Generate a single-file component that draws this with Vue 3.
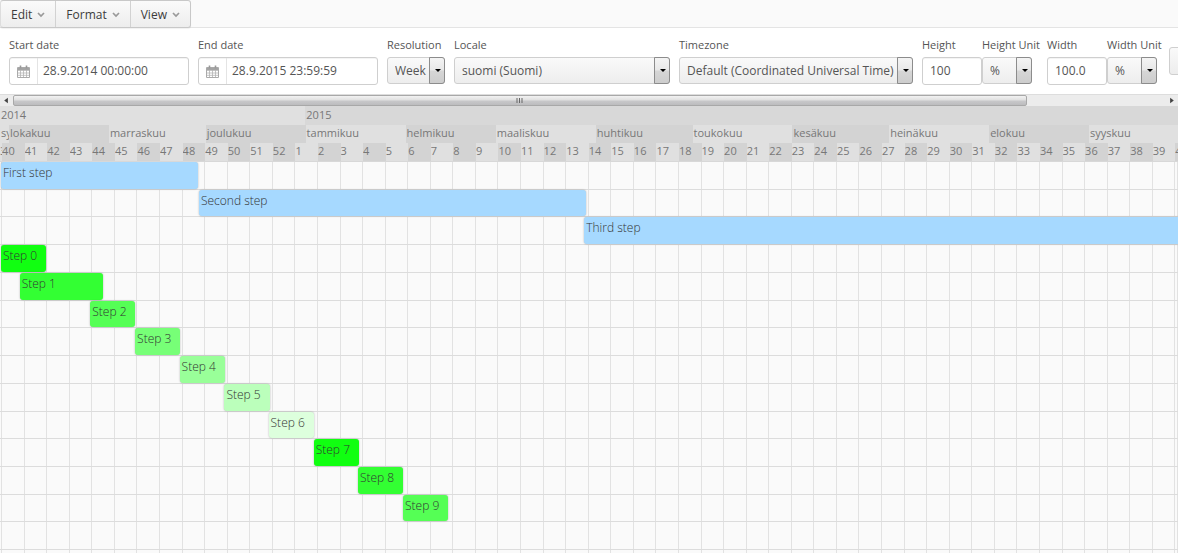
<script setup>
import { ref } from 'vue'

const menus = ['Edit', 'Format', 'View']

const startDate = ref('28.9.2014 00:00:00')
const endDate = ref('28.9.2015 23:59:59')
const height = ref('100')
const width = ref('100.0')

// Visible span of the timeline, in days.
const span = 365.35

const years = [
  { name: '2014', days: 94.7, dark: false },
  { name: '2015', days: span - 94.7, dark: true },
]

const monthList = [
  ['syyskuu', 2.79], ['lokakuu', 31], ['marraskuu', 30], ['joulukuu', 31],
  ['tammikuu', 31], ['helmikuu', 28], ['maaliskuu', 31], ['huhtikuu', 30],
  ['toukokuu', 31], ['kesäkuu', 30], ['heinäkuu', 31], ['elokuu', 31],
]
const monthDays = monthList.reduce((sum, m) => sum + m[1], 0)
const months = [...monthList, ['syyskuu', span - monthDays]].map(([name, days], i) => ({
  name, days, dark: i % 2 === 1,
}))

const weeks = [{ name: '39', days: 0.65, dark: false }]
for (let i = 0; i < 52; i++) {
  const n = ((39 + i) % 52) + 1
  weeks.push({ name: String(n), days: 7, dark: n % 2 === 0 })
}
weeks.push({ name: '40', days: span - 364.65, dark: true })

const tiers = [
  { key: 'year', cells: years },
  { key: 'month', cells: months },
  { key: 'week', cells: weeks },
]

const steps = [
  { name: 'First step', start: 0.3, days: 61.1, color: '#a6d9ff' },
  { name: 'Second step', start: 61.7, days: 120, color: '#a6d9ff' },
  { name: 'Third step', start: 181.2, days: 200, color: '#a6d9ff' },
  { name: 'Step 0', start: 0.3, days: 14, color: '#11ff11' },
  { name: 'Step 1', start: 6.1, days: 25.8, color: '#33ff33' },
  { name: 'Step 2', start: 28, days: 14, color: '#55ff55' },
  { name: 'Step 3', start: 41.9, days: 14, color: '#77ff77' },
  { name: 'Step 4', start: 55.7, days: 14, color: '#99ff99' },
  { name: 'Step 5', start: 69.6, days: 14, color: '#bbffbb' },
  { name: 'Step 6', start: 83.3, days: 14, color: '#ddffdd' },
  { name: 'Step 7', start: 97.3, days: 14, color: '#11ff11' },
  { name: 'Step 8', start: 111, days: 14, color: '#33ff33' },
  { name: 'Step 9', start: 125, days: 14, color: '#55ff55' },
]

const percent = (days) => (days / span) * 100 + '%'
</script>

<template>
  <div class="page">
    <nav class="menubar">
      <div class="menus">
        <button v-for="m in menus" :key="m" type="button" class="menu">
          {{ m }}
          <svg class="chevron" viewBox="0 0 8 6" aria-hidden="true"><path d="M1 1l3 3 3-3" /></svg>
        </button>
      </div>
    </nav>

    <form class="controls" @submit.prevent>
      <div class="field">
        <label for="start">Start date</label>
        <div class="date">
          <button type="button" class="picker" aria-label="Pick start date">
            <svg viewBox="0 0 13 13" aria-hidden="true">
              <path class="frame" d="M.5 2.5h12v10H.5z" />
              <path class="lines" d="M1 5.5h11M1 8h11M1 10.3h11M3.5 5v7M6.5 5v7M9.5 5v7" />
              <path class="head" d="M1 3h11v2H1z" />
              <path class="rings" d="M3.5 .5v3M9.5 .5v3" />
            </svg>
          </button>
          <input id="start" v-model="startDate" type="text" />
        </div>
      </div>
      <div class="field">
        <label for="end">End date</label>
        <div class="date">
          <button type="button" class="picker" aria-label="Pick end date">
            <svg viewBox="0 0 13 13" aria-hidden="true">
              <path class="frame" d="M.5 2.5h12v10H.5z" />
              <path class="lines" d="M1 5.5h11M1 8h11M1 10.3h11M3.5 5v7M6.5 5v7M9.5 5v7" />
              <path class="head" d="M1 3h11v2H1z" />
              <path class="rings" d="M3.5 .5v3M9.5 .5v3" />
            </svg>
          </button>
          <input id="end" v-model="endDate" type="text" />
        </div>
      </div>
      <div class="field">
        <label for="resolution">Resolution</label>
        <div class="select resolution"><select id="resolution"><option>Week</option></select></div>
      </div>
      <div class="field">
        <label for="locale">Locale</label>
        <div class="select locale"><select id="locale"><option>suomi (Suomi)</option></select></div>
      </div>
      <div class="field">
        <label for="timezone">Timezone</label>
        <div class="select timezone">
          <select id="timezone"><option>Default (Coordinated Universal Time)</option></select>
        </div>
      </div>
      <div class="pair">
        <div class="field">
          <label for="height">Height</label>
          <input id="height" v-model="height" class="number" type="text" />
        </div>
        <div class="field unit">
          <label for="height-unit">Height Unit</label>
          <div class="select"><select id="height-unit"><option>%</option></select></div>
        </div>
      </div>
      <div class="pair">
        <div class="field">
          <label for="width">Width</label>
          <input id="width" v-model="width" class="number" type="text" />
        </div>
        <div class="field unit">
          <label for="width-unit">Width Unit</label>
          <div class="select"><select id="width-unit"><option>%</option></select></div>
        </div>
      </div>
      <button type="button" class="more" aria-label="Update"></button>
    </form>

    <div class="scrollbar">
      <svg class="arrow" viewBox="0 0 13 12" aria-hidden="true"><path d="M8 3v6L4 6z" /></svg>
      <div class="track">
        <div class="thumb">
          <svg viewBox="0 0 7 5" aria-hidden="true"><path d="M1 0v5M3.5 0v5M6 0v5" /></svg>
        </div>
      </div>
      <svg class="arrow" viewBox="0 0 13 12" aria-hidden="true"><path d="M5 3v6l4-3z" /></svg>
    </div>

    <div class="timeline">
      <div v-for="t in tiers" :key="t.key" class="tier" :class="t.key">
        <div
          v-for="(c, i) in t.cells"
          :key="i"
          class="cell"
          :class="{ dark: c.dark }"
          :style="{ width: percent(c.days) }"
        >{{ c.name }}</div>
      </div>
    </div>

    <div class="chart">
      <div class="columns">
        <div v-for="(w, i) in weeks" :key="i" class="column" :style="{ width: percent(w.days) }"></div>
      </div>
      <div v-for="s in steps" :key="s.name" class="row">
        <div
          class="bar"
          :style="{ marginLeft: percent(s.start), width: percent(s.days), backgroundColor: s.color }"
        >{{ s.name }}</div>
      </div>
      <div class="row"></div>
    </div>
  </div>
</template>

<style>
body {
  margin: 0;
  background: #fff;
}
</style>

<style scoped>
.page {
  display: flex;
  flex-direction: column;
  min-height: 100vh;
  overflow: hidden;
  font-family: "Open Sans", "Noto Sans", sans-serif;
  font-size: 12px;
  color: #555;
}
.page * {
  box-sizing: border-box;
}
button,
input,
select {
  font: inherit;
  color: inherit;
  margin: 0;
}
.menubar {
  height: 28px;
  flex: none;
  background: #fafafa;
  border-bottom: 1px solid #e4e4e4;
}
.menus {
  display: inline-flex;
  height: 28px;
  border: 1px solid #c8c8c8;
  border-left-color: #ddd;
  border-radius: 3px;
  background: linear-gradient(#fafafa, #ededed);
  box-shadow: 0 1px 1px rgba(0, 0, 0, 0.06);
}
.menu {
  display: flex;
  align-items: center;
  gap: 5px;
  padding: 0 10px;
  border: 0;
  border-right: 1px solid #d2d2d2;
  background: none;
  color: #3c3c3c;
}
.menu:last-child {
  border-right: 0;
}
.chevron {
  width: 8px;
  height: 6px;
  margin-top: 2px;
  fill: none;
  stroke: #999;
  stroke-width: 1.7;
}
.controls {
  display: flex;
  flex: none;
  gap: 9px;
  padding: 9px 0 9px 9px;
}
.field {
  flex: none;
}
.field label {
  display: block;
  height: 20px;
  line-height: 16px;
  font-size: 11px;
  white-space: nowrap;
}
.date,
.number {
  display: flex;
  height: 28px;
  border: 1px solid #cfcfcf;
  border-radius: 3px;
  background: #fff;
  box-shadow: inset 0 1px 0 #f4f4f4;
}
.date {
  width: 180px;
}
.date input {
  flex: 1;
  min-width: 0;
  padding: 0 5px 1px;
  border: 0;
  background: none;
}
.picker {
  display: grid;
  place-items: center;
  width: 28px;
  padding: 0;
  border: 0;
  border-right: 1px solid #e4e4e4;
  background: none;
}
.picker svg {
  width: 13px;
  height: 13px;
  fill: none;
  stroke: #aaa;
}
.picker .lines {
  stroke: #b4b4b4;
  stroke-width: 0.8;
}
.picker .head {
  fill: #a4a4a4;
  stroke: none;
}
.picker .rings {
  stroke: #999;
  stroke-width: 1.6;
}
.select {
  position: relative;
  height: 27px;
}
.select select {
  appearance: none;
  width: 100%;
  height: 100%;
  padding: 0 16px 0 7px;
  border: 1px solid #cfcfcf;
  border-radius: 3px;
  background: linear-gradient(#fafafa, #ededed);
}
.select::before {
  content: "";
  position: absolute;
  top: 0;
  right: 0;
  bottom: 0;
  width: 14px;
  border: 1px solid #8c8c8c;
  border-radius: 0 3px 3px 0;
  background: linear-gradient(#f4f4f4, #e8e8e8 48%, #d6d6d6 52%, #cdcdcd);
  pointer-events: none;
}
.select::after {
  content: "";
  position: absolute;
  top: 12px;
  right: 4px;
  border: 3px solid transparent;
  border-top-color: #000;
  border-bottom-width: 0;
  pointer-events: none;
}
.resolution {
  width: 58px;
}
.locale {
  width: 216px;
}
.timezone {
  width: 234px;
}
.pair {
  display: flex;
  flex: none;
}
.number {
  width: 60px;
  padding: 0 7px 1px;
}
.unit {
  width: 56px;
}
.unit .select {
  width: 50px;
}
.pair:last-of-type .unit {
  width: 53px;
}
.more {
  flex: none;
  width: 60px;
  height: 28px;
  margin-top: 10px;
  border: 1px solid #cfcfcf;
  border-radius: 3px;
  background: linear-gradient(#fafafa, #ededed);
}
.scrollbar {
  display: flex;
  flex: none;
  height: 12px;
  background: #ececec;
  border-top: 1px solid #ddd;
}
.arrow {
  flex: none;
  width: 13px;
  height: 11px;
  fill: #444;
}
.track {
  flex: 1;
}
.thumb {
  display: grid;
  place-items: center;
  width: 88%;
  height: 11px;
  border: 1px solid #a8a8a8;
  border-radius: 2px;
  background: linear-gradient(#f2f2f2, #e0e0e0 45%, #c8c8ca 55%, #bcbcbe);
}
.thumb svg {
  width: 7px;
  height: 5px;
  stroke: #666;
}
.timeline {
  flex: none;
  border-bottom: 1px solid #d8d8d8;
  font-size: 11px;
  color: #777;
}
.tier {
  display: flex;
  height: 18px;
  line-height: 16px;
}
.tier.year {
  height: 19px;
  line-height: 18px;
}
.cell {
  flex: none;
  overflow: hidden;
  white-space: nowrap;
  background: #e0e0e0;
}
.month .cell,
.year .cell {
  padding-left: 1px;
}
.cell.dark {
  background: #d3d3d3;
}
.year .cell.dark {
  background: #d8d8d8;
}
.chart {
  position: relative;
  display: grid;
  flex: 1;
  grid-template-rows: repeat(14, minmax(20px, 10fr)) 1fr;
  overflow: hidden;
  background: #fafafa;
}
.columns {
  position: absolute;
  inset: 0;
  display: flex;
}
.column {
  flex: none;
  border-right: 1px solid #e2e2e2;
}
.row {
  position: relative;
  display: flex;
  border-bottom: 1px solid #dcdcdc;
}
.bar {
  flex: none;
  height: 100%;
  padding-left: 2px;
  border-radius: 3px;
  line-height: 22px;
  font-weight: 300;
  color: #333;
  white-space: nowrap;
  box-shadow: 0 0 2px rgba(0, 0, 0, 0.3);
}
</style>
